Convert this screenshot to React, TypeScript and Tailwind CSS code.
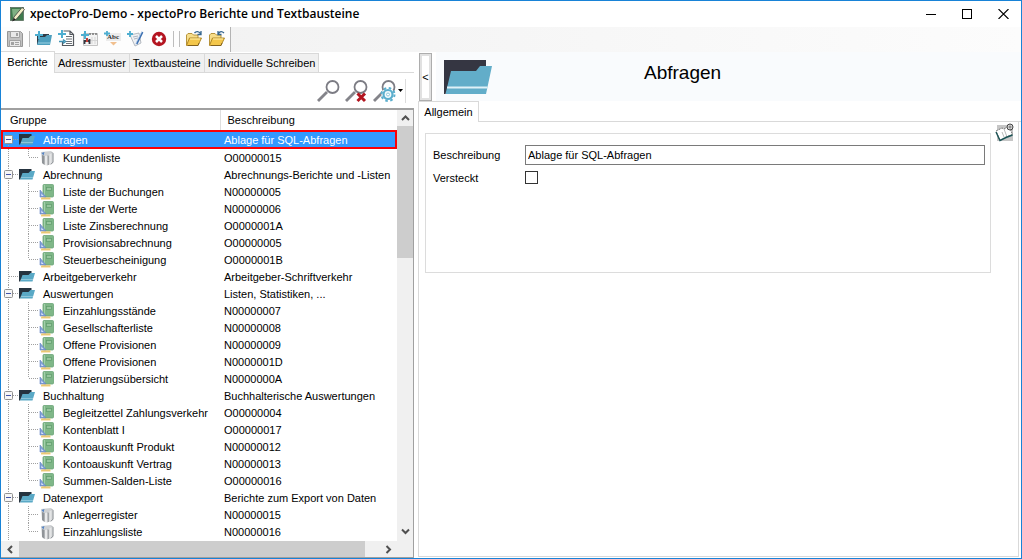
import type { ReactNode } from "react";

type Kind = "folder" | "report" | "query";
type Item = { name: string; text: string; kind: Kind; leaf?: boolean; last?: boolean };

const items: Item[] = [
  { name: "Abfragen", text: "Ablage für SQL-Abfragen", kind: "folder" },
  { name: "Kundenliste", text: "O00000015", kind: "query", last: true },
  { name: "Abrechnung", text: "Abrechnungs-Berichte und -Listen", kind: "folder" },
  { name: "Liste der Buchungen", text: "N00000005", kind: "report" },
  { name: "Liste der Werte", text: "N00000006", kind: "report" },
  { name: "Liste Zinsberechnung", text: "O0000001A", kind: "report" },
  { name: "Provisionsabrechnung", text: "O00000005", kind: "report" },
  { name: "Steuerbescheinigung", text: "O0000001B", kind: "report", last: true },
  { name: "Arbeitgeberverkehr", text: "Arbeitgeber-Schriftverkehr", kind: "folder", leaf: true },
  { name: "Auswertungen", text: "Listen, Statistiken, ...", kind: "folder" },
  { name: "Einzahlungsstände", text: "N00000007", kind: "report" },
  { name: "Gesellschafterliste", text: "N00000008", kind: "report" },
  { name: "Offene Provisionen", text: "N00000009", kind: "report" },
  { name: "Offene Provisionen", text: "N0000001D", kind: "report" },
  { name: "Platzierungsübersicht", text: "N0000000A", kind: "report", last: true },
  { name: "Buchhaltung", text: "Buchhalterische Auswertungen", kind: "folder" },
  { name: "Begleitzettel Zahlungsverkehr", text: "O00000004", kind: "report" },
  { name: "Kontenblatt I", text: "O00000017", kind: "report" },
  { name: "Kontoauskunft Produkt", text: "N00000012", kind: "report" },
  { name: "Kontoauskunft Vertrag", text: "N00000013", kind: "report" },
  { name: "Summen-Salden-Liste", text: "O00000016", kind: "report", last: true },
  { name: "Datenexport", text: "Berichte zum Export von Daten", kind: "folder" },
  { name: "Anlegerregister", text: "N00000015", kind: "query" },
  { name: "Einzahlungsliste", text: "N00000016", kind: "query", last: true },
];

function TreeLines({ item, first }: { item: Item; first: boolean }) {
  const dots = { stroke: "#a0a0a0", strokeDasharray: "1 1", fill: "none" };
  if (item.kind === "folder") {
    return (
      <svg width="18" height="17" className="shrink-0">
        <path d={first ? "M7.5 8V17" : "M7.5 0V17"} {...dots} />
        <path d="M8 8.5H18" {...dots} />
        {!item.leaf && (
          <>
            <rect x="3.5" y="4.5" width="8" height="8" rx="1" fill="#f6f6f6" stroke="#919191" />
            <path d="M5 8.5H10" stroke="#4354a8" />
          </>
        )}
      </svg>
    );
  }
  return (
    <svg width="38" height="17" className="shrink-0">
      <path d="M7.5 0V17" {...dots} />
      <path d={item.last ? "M27.5 0V8" : "M27.5 0V17"} {...dots} />
      <path d="M28 8.5H38" {...dots} />
    </svg>
  );
}

function RowIcon({ kind }: { kind: Kind }) {
  if (kind === "folder")
    return (
      <svg width="17" height="13" viewBox="0 0 17 13" className="shrink-0">
        <path d="M0 1H12.500V9H0Z" fill="#25333f" />
        <path d="M3.500 5H9.500L11.500 3H16L13.500 11.500H1Z" fill="#5aa9c6" />
        <path d="M2 9.500H14" stroke="#8cc6db" />
        <path d="M0 9H2L1 11.500H0Z" fill="#25333f" />
      </svg>
    );
  if (kind === "report")
    return (
      <svg width="16" height="16" viewBox="0 0 16 16" className="shrink-0">
        <rect x="4" y="0.5" width="10.500" height="12.500" rx="1" fill="#7fb788" stroke="#6ba577" strokeWidth=".8" />
        <path d="M5.500 1V13" stroke="#a3cfaa" />
        <rect x="7.500" y="3.500" width="5" height="3" fill="#98c69e" stroke="#5f9c6b" strokeWidth=".7" />
        <path d="M1 6L7 13H1Z" fill="#7f9fd6" stroke="#6485c4" strokeWidth=".6" />
        <path d="M2.400 9.500L4.500 12H2.400Z" fill="#dce7fa" />
        <path d="M2 13.500H11.500V15.500H2Z" fill="#f0cf7c" />
        <path d="M4 13.500V14.500M6 13.500V14.500M8 13.500V14.500M10 13.500V14.500" stroke="#c9a04a" strokeWidth=".6" />
      </svg>
    );
  return (
    <svg width="16" height="16" viewBox="0 0 16 16" className="shrink-0">
      <path d="M2 2L12 1L14.500 3V13L11.500 15L9 14V15.500L6 15L3 13Z" fill="#cfd1d3" />
      <path d="M3 5L5.500 6V15L3 13Z" fill="#909498" />
      <path d="M6 6L8.500 5.500V15L6 15Z" fill="#e9eaeb" />
      <path d="M8.500 5L10 6V15L8.500 15Z" fill="#a2a5a8" />
      <path d="M10.500 4L12.500 3.500V13L10.500 14Z" fill="#e4e5e6" />
      <path d="M13 2.500L14 3.500V12L12 14" fill="none" stroke="#979b9f" />
      <path d="M2.500 3L5.500 2L4.500 5.500Z" fill="#5584c4" />
    </svg>
  );
}

const Plus = () => <path d="M4 0V8M0 4H8" stroke="#4eaed0" strokeWidth="2" />;

function FolderArrow({ back }: { back?: boolean }) {
  return (
    <svg width="18" height="18" viewBox="0 0 18 18">
      <path d="M1.500 15V5L3 3.500H7L8.500 5H13V8" fill="#f6dd8a" stroke="#b08a2c" strokeWidth=".9" />
      <path d="M1.500 15.500L4.500 8H16.500L13 15.500Z" fill="#f3c64a" stroke="#a98120" strokeWidth=".9" />
      <path d="M5 9H15" stroke="#fff0b0" />
      <path d="M3 15.500H13L14 13" stroke="#74551a" fill="none" strokeWidth=".8" />
      {back ? (
        <path d="M16 3C14 1 12 1 10.500 3.500M10 1V4.500H13.500" fill="none" stroke="#35658f" strokeWidth="1.300" />
      ) : (
        <path d="M9.500 3C11 1 14 1 15.500 3.500M16 1V4.500H12.500" fill="none" stroke="#35658f" strokeWidth="1.300" />
      )}
    </svg>
  );
}

function Magnifier({ children }: { children?: ReactNode }) {
  return (
    <svg width="24" height="24" viewBox="0 0 24 24">
      <path d="M2 22L11 13" stroke="#84848a" strokeWidth="2.800" />
      <circle cx="16.500" cy="8" r="6" fill="#fff" stroke="#7c7c84" strokeWidth="1.800" />
      {children}
    </svg>
  );
}

function ToolButton({ label, children, disabled }: { label: string; children: ReactNode; disabled?: boolean }) {
  return (
    <button aria-label={label} disabled={disabled} className="flex h-5 w-[18px] items-center justify-center">
      {children}
    </button>
  );
}

function Toolbar() {
  return (
    <div className="flex h-[25px] shrink-0 bg-linear-to-r from-[#f0f0f0] to-[#fcfcfc]">
      <div className="flex items-center gap-[5px] border-r border-[#b4b4b4] bg-[#fdfdfd] pr-1 pb-0.5 pl-[5px]">
        <ToolButton label="Speichern" disabled>
          <svg width="18" height="18" viewBox="0 0 18 18">
            <path d="M1.500 1.500H14.500L16.500 3.500V16.500H1.500Z" fill="#c2c2c2" stroke="#969696" />
            <path d="M4.500 1.500H13.500V7.500H4.500ZM3.500 10.500H14.500V16.500H3.500Z" fill="#e9e9e9" stroke="#a2a2a2" />
            <path d="M10 3H12V6H10ZM5 12H8V15H5Z" fill="#a2a2a2" />
            <path d="M9 12.500H13M9 14.500H13" stroke="#a2a2a2" />
          </svg>
        </ToolButton>
        <span className="h-4 w-px bg-[#bdbdbd]" />
        <ToolButton label="Neue Gruppe">
          <svg width="18" height="16" viewBox="0 0 18 16">
            <path d="M2 3H14V13H2Z" fill="#303a45" />
            <path d="M4 6H10L12 4H17L15 14H2Z" fill="#4d9ebd" />
            <path d="M3 12H15" stroke="#9bd0e2" />
            <Plus />
          </svg>
        </ToolButton>
        <ToolButton label="Neuer Bericht">
          <svg width="18" height="17" viewBox="0 0 18 17">
            <path d="M5.500 1H12L15.500 4.500V15.500H4.500V12M12 1V4.500H15.500" fill="#fff" stroke="#54585e" strokeWidth="1.200" />
            <path d="M8 6.500H14M8 9H14M8 11.500H14M8 13.500H14" stroke="#6e7379" />
            <path d="M1 11.500H6M5 9.500L7.500 11.500L5 13.500" fill="none" stroke="#4193b4" strokeWidth="1.500" />
            <Plus />
          </svg>
        </ToolButton>
        <ToolButton label="Neue Serie">
          <svg width="18" height="16" viewBox="0 0 18 16">
            <path d="M2.500 2.500H16.500V14.500H2.500Z" fill="#f4f4f4" stroke="#c4c4c4" />
            <path d="M8 3H16" stroke="#777" strokeWidth="1.500" strokeDasharray="2 1" />
            <path d="M11 6V13M14 6V13M9 9.500H16" stroke="#d6d6d6" />
            <path d="M3.500 13V9M8.500 13V8M3 10H5M7 10H9" stroke="#353942" strokeWidth="1.800" fill="none" />
            <path d="M5 7H7V11H5Z" fill="#c43b35" />
            <Plus />
          </svg>
        </ToolButton>
        <ToolButton label="Neuer Text">
          <svg width="18" height="16" viewBox="0 0 18 16">
            <rect x="2" y="2" width="15" height="8" fill="#ececec" />
            <text x="3" y="8" fontSize="7" fontWeight="700" fontFamily="Liberation Serif, serif" fill="#333">Abc</text>
            <path d="M6 11H13L9.500 14.500Z" fill="#f1c08f" />
            <path d="M3 0V5M0 2.500H6" stroke="#4eaed0" strokeWidth="1.800" />
          </svg>
        </ToolButton>
        <ToolButton label="Neues Schreiben">
          <svg width="18" height="17" viewBox="0 0 18 17">
            <path d="M3 5L12 3L14 13L8 16Z" fill="#eff1f4" stroke="#a5abb4" strokeWidth=".8" />
            <path d="M6 7L11 6M7 9L11 8" stroke="#aeb6c2" />
            <path d="M15.500 2L9.500 14" stroke="#3b6fb1" strokeWidth="2" />
            <path d="M15 1L9 13L8.500 15" stroke="#d8e5f4" fill="none" strokeWidth=".8" />
            <path d="M3 1V7M0 4H6" stroke="#4eaed0" strokeWidth="1.800" />
          </svg>
        </ToolButton>
        <ToolButton label="Löschen">
          <svg width="16" height="16" viewBox="0 0 16 16">
            <circle cx="8" cy="8" r="7.200" fill="#b41521" />
            <path d="M5 5L11 11M11 5L5 11" stroke="#fff" strokeWidth="2.500" />
          </svg>
        </ToolButton>
        <span className="h-4 w-px bg-[#bdbdbd]" />
        <span className="h-4 w-px bg-[#bdbdbd]" />
        <ToolButton label="Importieren"><FolderArrow /></ToolButton>
        <ToolButton label="Exportieren"><FolderArrow back /></ToolButton>
      </div>
    </div>
  );
}

function Chevron({ d }: { d: string }) {
  return (
    <svg width="9" height="9" viewBox="0 0 9 9">
      <path d={d} fill="none" stroke="#505050" strokeWidth="2" />
    </svg>
  );
}

function Explorer() {
  const tabs = ["Adressmuster", "Textbausteine", "Individuelle Schreiben"];
  return (
    <section className="flex w-[413px] shrink-0 flex-col">
      <div role="tablist" className="flex h-[21px] shrink-0 items-end border-b border-[#d9d9d9]">
        <button role="tab" aria-selected="true" className="-mb-px h-[22px] w-[54px] border-t border-r border-[#d9d9d9] bg-white pb-0.5 text-center">
          Berichte
        </button>
        {tabs.map((t) => (
          <button role="tab" aria-selected="false" key={t} className="h-[19px] border-t border-r border-[#d9d9d9] bg-[#f0f0f0] px-[3px]">
            {t}
          </button>
        ))}
      </div>
      <div className="flex h-[35px] shrink-0 items-center justify-end gap-1 pr-2">
        <button aria-label="Suchen"><Magnifier /></button>
        <button aria-label="Suche löschen">
          <Magnifier>
            <path d="M13.500 14.500L21 22M21 14.500L13.500 22" stroke="#b3151f" strokeWidth="3" />
          </Magnifier>
        </button>
        <button aria-label="Suchoptionen" className="flex items-center gap-0.5">
          <Magnifier>
            <circle cx="16" cy="15.500" r="6.500" fill="#fff" stroke="#5baecd" strokeWidth="2" strokeDasharray="2.550 2.550" />
            <circle cx="16" cy="15.500" r="4.500" fill="#f4fafc" stroke="#5baecd" strokeWidth="2.200" />
            <circle cx="16" cy="15.500" r="1.500" fill="#fff" stroke="#8cc8dd" />
          </Magnifier>
          <svg width="5" height="3"><path d="M0 0H5L2.500 3Z" fill="#000" /></svg>
        </button>
        <span className="-ml-0.5 h-6 w-px bg-[#dcdcdc]" />
      </div>
      <div className="flex min-h-0 flex-1 flex-col border-t-2 border-r border-b border-[#a0a0a0]">
        <div className="flex min-h-0 flex-1">
          <div className="min-w-0 flex-1 overflow-hidden">
            <table className="w-full table-fixed border-collapse">
              <thead>
                <tr className="h-5 text-left">
                  <th className="w-[219px] border-r border-[#dedede] p-0 pl-[9px] font-normal">Gruppe</th>
                  <th className="p-0 pl-[7px] font-normal">Beschreibung</th>
                </tr>
              </thead>
              <tbody>
                {items.map((item, i) => (
                  <tr
                    key={i}
                    className={
                      i === 0
                        ? "h-[19px] bg-[#3399ff] text-white outline-2 -outline-offset-2 outline-[#fb0007]"
                        : "h-[17px]"
                    }
                  >
                    <td className="p-0">
                      <div className="flex h-[17px] items-center">
                        <TreeLines item={item} first={i === 0} />
                        <RowIcon kind={item.kind} />
                        <span className={item.kind === "folder" ? "pl-[7px]" : "pl-2"}>{item.name}</span>
                      </div>
                    </td>
                    <td className="p-0 pl-1 whitespace-nowrap">{item.text}</td>
                  </tr>
                ))}
              </tbody>
            </table>
          </div>
          <div className="flex w-4 shrink-0 flex-col bg-[#f0f0f0]">
            <button aria-label="Nach oben" className="flex h-4 items-center justify-center">
              <Chevron d="M1 6L4.500 2.500L8 6" />
            </button>
            <div className="h-[132px] bg-[#cdcdcd]" />
            <button aria-label="Nach unten" className="mt-auto flex h-5 items-center justify-center">
              <Chevron d="M1 2.500L4.500 6L8 2.500" />
            </button>
          </div>
        </div>
        <div className="flex h-4 shrink-0 bg-[#f0f0f0]">
          <button aria-label="Nach links" className="flex w-[18px] items-center justify-center">
            <Chevron d="M6 1L2.500 4.500L6 8" />
          </button>
          <div className="min-w-0 flex-1 bg-[#cdcdcd]" />
          <button aria-label="Nach rechts" className="mr-4 flex w-8 items-center justify-end pr-1">
            <Chevron d="M2.500 1L6 4.500L2.500 8" />
          </button>
        </div>
      </div>
    </section>
  );
}

function Detail() {
  return (
    <section className="flex min-w-0 flex-1 flex-col pl-1">
      <header className="flex h-[49px] shrink-0 items-center bg-[#f9fbfd]">
        <div className="flex h-full w-[18px] items-center bg-white pl-px">
          <button aria-label="Leiste einklappen" className="h-12 w-[13px] border border-[#adadad] bg-white text-center outline-2 -outline-offset-3 outline-[#e1e1e1]">
            &lt;
          </button>
        </div>
        <svg width="48" height="34" viewBox="0 0 48 34" className="ml-2 shrink-0">
          <path d="M0 0H42V32H0Z" fill="#353642" />
          <path d="M36 6H48L42 34H1.500L7 11H32Z" fill="#62adc9" />
          <path d="M3 27.500H43.500" stroke="#dff1f8" strokeWidth="2" />
          <path d="M0 32H2L1.500 34H0Z" fill="#353642" />
        </svg>
        <h1 className="ml-[152px] pb-2 text-[19px] leading-6">Abfragen</h1>
      </header>
      <div role="tablist" className="flex h-[21px] shrink-0 items-end border-b border-[#d9d9d9]">
        <button role="tab" aria-selected="true" className="-mb-px h-[21px] w-[61px] border-x border-t border-[#d9d9d9] bg-white text-center">
          Allgemein
        </button>
      </div>
      <div className="mr-0.5 mb-px flex flex-1 items-start border-x border-b border-[#d9d9d9]">
        <form className="mt-[11px] ml-1.5 h-[140px] min-w-0 flex-1 border border-[#dcdcdc] px-[5px] pt-[11px]">
          <div className="flex h-5 items-center pl-0.5">
            <label htmlFor="beschreibung" className="w-[92px] shrink-0">Beschreibung</label>
            <input
              id="beschreibung"
              type="text"
              defaultValue="Ablage für SQL-Abfragen"
              className="h-5 min-w-0 flex-1 border border-[#7a7a7a] bg-white px-0.5 outline-none"
            />
          </div>
          <div className="mt-1.5 flex h-[13px] items-center pl-0.5">
            <label htmlFor="versteckt" className="w-[92px] shrink-0">Versteckt</label>
            <input id="versteckt" type="checkbox" className="h-[13px] w-[13px] appearance-none border border-[#333] bg-white checked:bg-[#333]" />
          </div>
        </form>
        <button aria-label="Notizen" className="mx-1 mt-px">
          <svg width="19" height="19" viewBox="0 0 19 19">
            <rect x="2" y="2" width="16" height="16" fill="#c6c6c6" />
            <path d="M1 8L7 5L9 6L14 3L17.500 11.500L11 14L5 17.500Z" fill="#fff" stroke="#555" strokeWidth=".8" strokeDasharray="2 1" />
            <path d="M9 6L12 14M7 9L9 14" stroke="#aaa" strokeWidth=".8" />
            <path d="M1 9L5 17.500L11 14.500L17.500 12" fill="none" stroke="#1c5456" strokeWidth="1.400" />
            <circle cx="15" cy="4" r="3" fill="#d8d8d8" stroke="#444" />
            <circle cx="15" cy="4" r="1" fill="#fff" stroke="#555" strokeWidth=".8" />
          </svg>
        </button>
      </div>
    </section>
  );
}

export default function App() {
  return (
    <div className="flex h-screen flex-col overflow-hidden border border-[#1883d7] bg-white font-['Liberation_Sans',Arial,sans-serif] text-[11px] leading-[14px] text-black">
      <div className="flex h-[26px] shrink-0 items-center">
        <svg width="16" height="16" viewBox="0 0 16 16" className="ml-2 shrink-0">
          <rect x="1.500" y="1.500" width="13" height="13" fill="#3f7a4c" stroke="#5a6f5f" strokeWidth=".8" />
          <path d="M3 3H12L4 12Z" fill="#7fb083" />
          <path d="M3.500 15L5 11L13 1.500L15.500 3.500L7.500 13Z" fill="#f1edc4" stroke="#444" strokeWidth=".8" />
          <path d="M3.500 15L5 12L6.500 13.500Z" fill="#111" />
        </svg>
        <span className="ml-[5px] font-['Open_Sans',sans-serif] text-[12px] font-semibold">
          xpectoPro-Demo - xpectoPro Berichte und Textbausteine
        </span>
        <div className="ml-auto flex items-center gap-[26px] pr-3">
          <button aria-label="Minimieren">
            <svg width="10" height="10"><path d="M0 5.500H10" stroke="#000" /></svg>
          </button>
          <button aria-label="Maximieren">
            <svg width="10" height="10"><rect x=".5" y=".5" width="9" height="9" fill="none" stroke="#000" /></svg>
          </button>
          <button aria-label="Schließen">
            <svg width="11" height="10"><path d="M.5 0L10.500 10M10.500 0L.5 10" stroke="#000" strokeWidth="1.100" /></svg>
          </button>
        </div>
      </div>
      <Toolbar />
      <main className="flex min-h-0 flex-1">
        <Explorer />
        <Detail />
      </main>
    </div>
  );
}
